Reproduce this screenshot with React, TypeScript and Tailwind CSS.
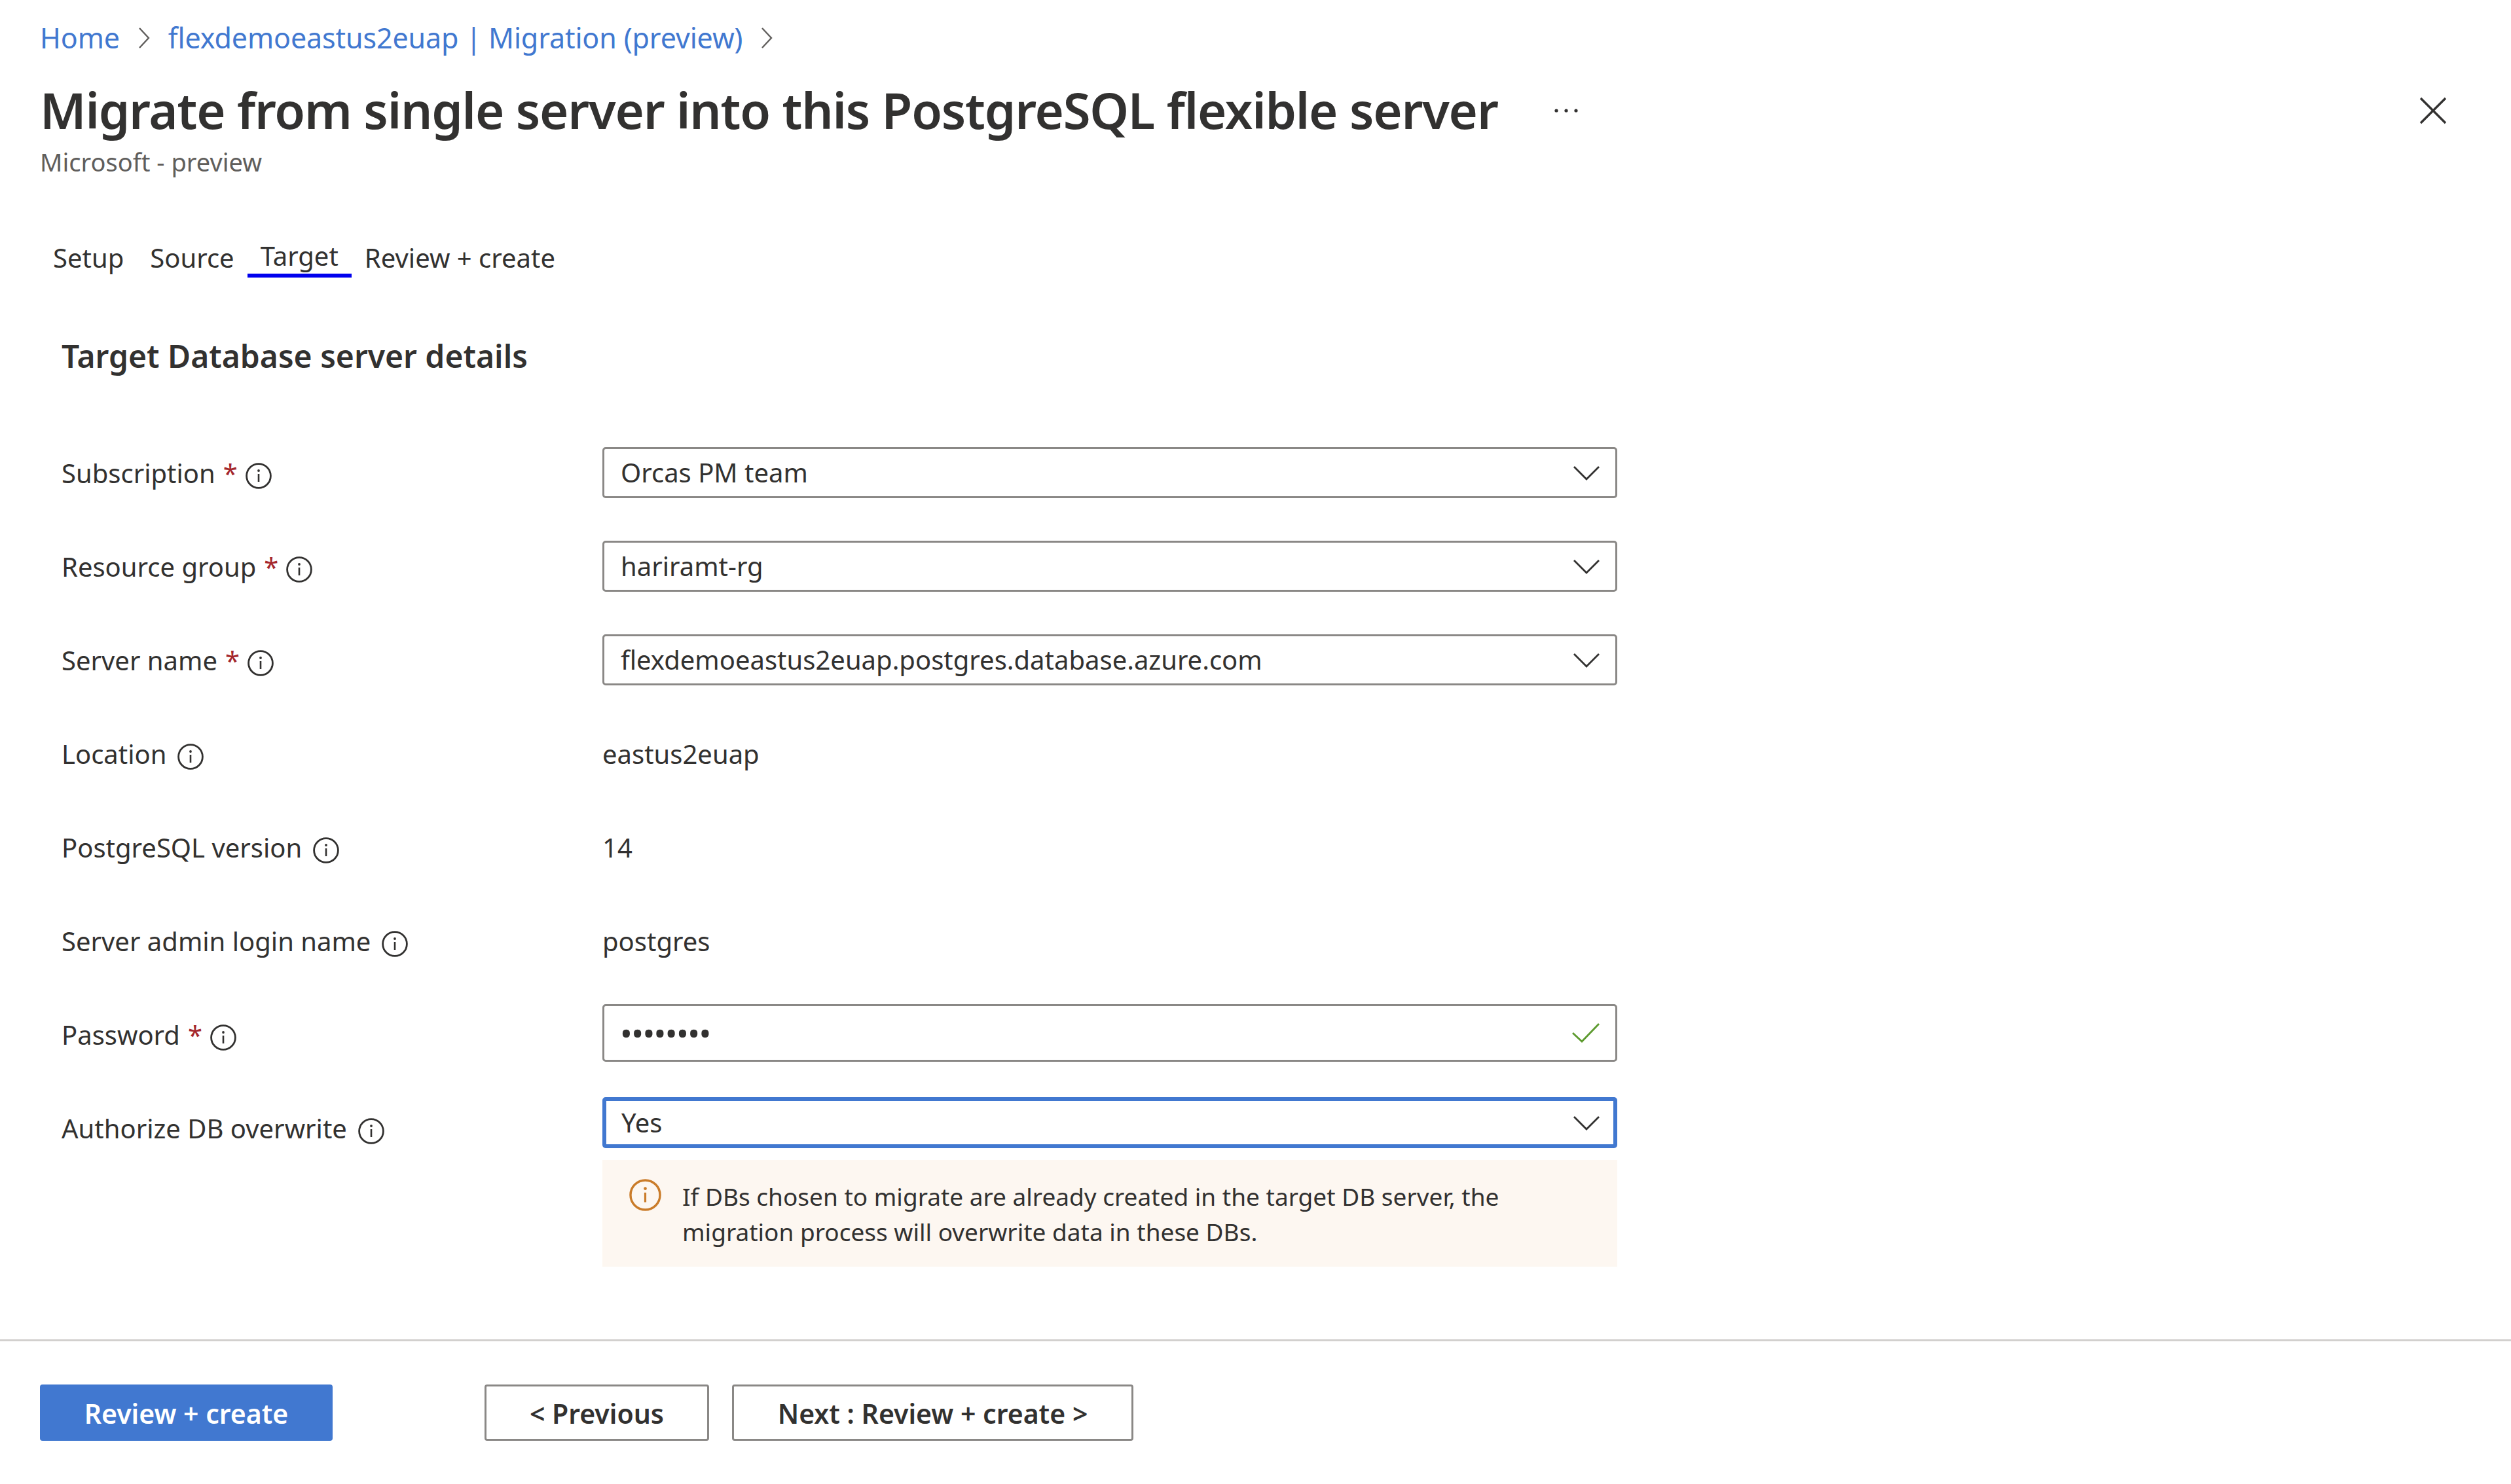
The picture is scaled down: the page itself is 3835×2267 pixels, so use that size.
import type { ReactNode } from "react";

function InfoIcon({ className = "" }: { className?: string }) {
  return (
    <svg viewBox="0 0 40 40" className={`shrink-0 ${className}`} fill="none" stroke="currentColor">
      <circle cx="20" cy="20" r="18.4" strokeWidth="2.8" />
      <path d="M20 17v12" strokeWidth="2.6" />
      <circle cx="20" cy="12" r="1.9" fill="currentColor" stroke="none" />
    </svg>
  );
}

function ChevronRight() {
  return (
    <svg viewBox="0 0 20 34" className="h-[34px] w-[20px] shrink-0 text-[#605e5c]" fill="none" stroke="currentColor" strokeWidth="2.4">
      <path d="M3 2l14 15L3 32" />
    </svg>
  );
}

function ChevronDown() {
  return (
    <svg viewBox="0 0 40 22" className="mt-[2px] h-[22px] w-[40px] shrink-0 text-[#323130]" fill="none" stroke="currentColor" strokeWidth="2.8">
      <path d="M1 1l19 19L39 1" />
    </svg>
  );
}

function Field({ label, required, children }: { label: string; required?: boolean; children: ReactNode }) {
  return (
    <div className="flex min-h-[88px] items-start">
      <div className="flex w-[826px] shrink-0 items-start text-[40px] leading-[80px] text-[#323130]">
        <span>{label}</span>
        {required && <span className="-mr-[5px] ml-[12px] text-[#a4262c]">*</span>}
        <InfoIcon className="ml-[17px] mt-[24px] h-[40px] w-[40px]" />
      </div>
      <div className="w-[1550px]">{children}</div>
    </div>
  );
}

function SelectBox({ value, focused }: { value: string; focused?: boolean }) {
  return (
    <div
      className={`flex h-[78px] items-center justify-between rounded-[5px] text-[40px] text-[#323130] ${
        focused ? "-mt-[8px] border-[6px] border-[#4178d0] pl-[23px] pr-[21px]" : "border-[3px] border-[#8a8886] pl-[25px] pr-[24px]"
      }`}
    >
      <span>{value}</span>
      <ChevronDown />
    </div>
  );
}

function StaticValue({ children }: { children: ReactNode }) {
  return <div className="text-[40px] leading-[80px] text-[#323130]">{children}</div>;
}

export default function App() {
  return (
    <div className="flex h-[2267px] w-full flex-col overflow-hidden bg-white font-['Noto_Sans','Open_Sans',sans-serif]">
      <div className="px-[61px] pt-[28px]">
        <div className="flex h-[60px] items-center gap-[27px] text-[43px] tracking-[-0.12px] text-[#4178d0]">
          <span>Home</span>
          <ChevronRight />
          <span>flexdemoeastus2euap | Migration (preview)</span>
          <ChevronRight />
        </div>

        <div className="mt-[24px] flex h-[112px] items-center">
          <h1 className="text-[76px] font-semibold tracking-[-1.2px] text-[#323130]">Migrate from single server into this PostgreSQL flexible server</h1>
          <svg viewBox="0 0 36 6" className="ml-[86px] mt-[2px] h-[6px] w-[36px] text-[#323130]" fill="currentColor">
            <circle cx="3" cy="3" r="2.6" />
            <circle cx="18" cy="3" r="2.6" />
            <circle cx="33" cy="3" r="2.6" />
          </svg>
          <svg viewBox="0 0 42 42" className="ml-auto mr-[37px] mt-[2px] h-[42px] w-[42px] text-[#323130]" fill="none" stroke="currentColor" strokeWidth="3.4">
            <path d="M2 2l38 38M40 2L2 40" />
          </svg>
        </div>

        <div className="-mt-[5px] text-[38px] text-[#605e5c]">Microsoft - preview</div>
      </div>

      <div className="mt-[88px] flex items-start pl-[61px] text-[40px] leading-[60px] text-[#323130]">
        <div className="px-[20px]">Setup</div>
        <div className="px-[20px]">Source</div>
        <div className="border-b-[6px] border-[#0000ee] px-[20px] leading-[54px]">Target</div>
        <div className="px-[20px]">Review + create</div>
      </div>

      <h2 className="mt-[84px] pl-[94px] text-[48px] font-semibold text-[#323130]">Target Database server details</h2>

      <div className="mt-[103px] flex flex-col gap-[55px] pl-[94px]">
        <Field label="Subscription" required>
          <SelectBox value="Orcas PM team" />
        </Field>
        <Field label="Resource group" required>
          <SelectBox value="hariramt-rg" />
        </Field>
        <Field label="Server name" required>
          <SelectBox value="flexdemoeastus2euap.postgres.database.azure.com" />
        </Field>
        <Field label="Location">
          <StaticValue>eastus2euap</StaticValue>
        </Field>
        <Field label="PostgreSQL version">
          <StaticValue>14</StaticValue>
        </Field>
        <Field label="Server admin login name">
          <StaticValue>postgres</StaticValue>
        </Field>
        <Field label="Password" required>
          <div className="-mt-[7px] flex h-[88px] items-center justify-between rounded-[5px] border-[3px] border-[#8a8886] pl-[24px] pr-[24px] text-[#323130]">
            <span className="text-[50px] leading-[60px] tracking-[-1.6px]">••••••••</span>
            <svg viewBox="0 0 42 30" className="h-[30px] w-[42px] text-[#5c9a2e]" fill="none" stroke="currentColor" strokeWidth="2.8">
              <path d="M1 15l14 13L41 1" />
            </svg>
          </div>
        </Field>
        <Field label="Authorize DB overwrite">
          <SelectBox value="Yes" focused />
          <div className="mt-[18px] flex h-[163px] items-start bg-[#fdf7f1] pl-[41px] pt-[29px]">
            <InfoIcon className="h-[49px] w-[49px] text-[#ca7c2a]" />
            <p className="ml-[32px] text-[37px] leading-[54px] text-[#323130]">
              If DBs chosen to migrate are already created in the target DB server, the
              <br />
              migration process will overwrite data in these DBs.
            </p>
          </div>
        </Field>
      </div>

      <div className="mt-[111px] h-[3px] bg-[#d2d0ce]" />

      <div className="mt-[66px] flex px-[61px]">
        <button className="h-[86px] w-[447px] rounded-[4px] bg-[#4178d0] pt-[3px] text-[41px] font-semibold text-white">Review + create</button>
        <button className="ml-[232px] h-[86px] w-[343px] rounded-[4px] border-[3px] border-[#8a8886] pt-[3px] text-[41px] font-semibold text-[#323130]">&lt; Previous</button>
        <button className="ml-[35px] h-[86px] w-[613px] rounded-[4px] border-[3px] border-[#8a8886] pt-[3px] text-[41px] font-semibold text-[#323130]">Next : Review + create &gt;</button>
      </div>
    </div>
  );
}
